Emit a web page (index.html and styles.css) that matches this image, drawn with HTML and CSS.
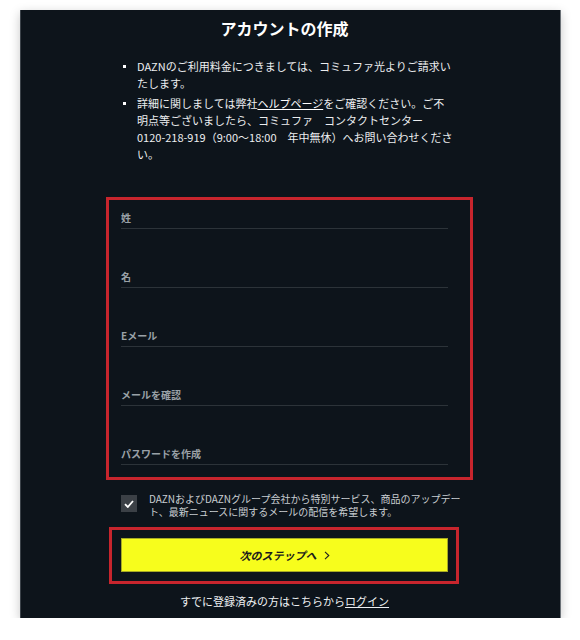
FILE: index.html
```html
<!DOCTYPE html>
<html lang="ja">
<head>
  <meta charset="UTF-8">
  <meta name="viewport" content="width=device-width, initial-scale=1.0">
  <title>アカウントの作成 - DAZN</title>
  <link rel="stylesheet" href="styles.css">
</head>
<body>
  <div class="signup-panel">
    <div class="signup-column">
      <h1>アカウントの作成</h1>
      <ul class="notes">
        <li>DAZNのご利用料金につきましては、コミュファ光よりご請求いたします。</li>
        <li>詳細に関しましては弊社<a href="#">ヘルプページ</a>をご確認ください。ご不明点等ございましたら、コミュファ　コンタクトセンター<span class="tel">0120-218-919（9:00～18:00</span>　年中無休）へお問い合わせください。</li>
      </ul>

      <form id="signupForm" class="field-box">
        <div class="field"><label for="lastName">姓</label><input type="text" id="lastName"></div>
        <div class="field"><label for="firstName">名</label><input type="text" id="firstName"></div>
        <div class="field"><label for="email">Eメール</label><input type="email" id="email"></div>
        <div class="field"><label for="emailConfirm">メールを確認</label><input type="email" id="emailConfirm"></div>
        <div class="field"><label for="password">パスワードを作成</label><input type="password" id="password"></div>
      </form>

      <div class="optin">
        <span class="check">
          <svg width="10" height="8" viewBox="0 0 10 8"><path d="M1 4.2 L3.8 7 L9 1" fill="none" stroke="#fff" stroke-width="1.8"/></svg>
        </span>
        <p>DAZNおよびDAZNグループ会社から特別サービス、商品のアップデート、最新ニュースに関するメールの配信を希望します。</p>
      </div>

      <div class="btn-box">
        <button type="submit" form="signupForm" class="btn">次のステップへ
          <svg width="6" height="9" viewBox="0 0 6 9"><path d="M1 0.8 L4.8 4.5 L1 8.2" fill="none" stroke="#222" stroke-width="1.1"/></svg>
        </button>
      </div>

      <p class="login-link">すでに登録済みの方はこちらから<a href="#">ログイン</a></p>
    </div>
  </div>
</body>
</html>
```

FILE: styles.css
```css
* {
  box-sizing: border-box;
  margin: 0;
  padding: 0;
}

body {
  background: #fff;
  padding: 10px 19px 0 20px;
  font-family: "Noto Sans CJK JP", "Noto Sans", sans-serif;
}

.signup-panel {
  width: 541px;
  height: 608px;
  background-color: #0d141b;
  border-left: 1px solid #3c434a;
  border-right: 1px solid #6b7177;
  box-shadow: 0 3px 10px rgba(0,0,0,0.22);
  padding-left: 100px;
}

.signup-column {
  width: 360px;
}

.signup-column h1 {
  width: 327px;
  padding-top: 6px;
  color: #fff;
  font-size: 16px;
  line-height: 24px;
  font-weight: 700;
  text-align: center;
}

.notes {
  list-style: none;
  margin: 18px 0 0 2px;
  width: 332px;
}

.notes li {
  position: relative;
  padding-left: 14px;
  color: #eceef0;
  font-size: 11px;
  line-height: 17px;
  margin-bottom: 3px;
}

.notes li::before {
  content: "";
  position: absolute;
  left: 0;
  top: 7px;
  width: 3px;
  height: 3px;
  background: #fff;
}

.notes a {
  color: #fff;
  text-decoration: underline;
}

.tel {
  white-space: nowrap;
}

.field-box {
  width: 367px;
  margin: 34px 0 0 -15px;
  border: 3px solid #c7252d;
  padding: 11px 22px 12px 12px;
}

.field {
  display: flex;
  flex-direction: column;
  border-bottom: 1px solid #2c3339;
  padding-bottom: 3px;
  margin-top: 41px;
}

.field:first-child {
  margin-top: 0;
}

.field label {
  color: #9aa1a7;
  font-size: 10px;
  line-height: 14px;
  font-weight: 700;
}

.field input {
  display: none;
}

.optin {
  display: flex;
  gap: 12px;
  margin-top: 15px;
  width: 346px;
}

.check {
  flex: none;
  width: 16px;
  height: 17px;
  background: #3b4046;
  display: flex;
  justify-content: center;
  align-items: center;
}

.optin p {
  color: #c9ced2;
  font-size: 10px;
  line-height: 13px;
  margin-top: -3px;
  width: 312px;
}

.btn-box {
  width: 350px;
  margin: 9px 0 0 -12px;
  border: 3px solid #c7252d;
  padding: 8px 8px 9px 9px;
}

.btn {
  width: 327px;
  height: 34px;
  background-color: #f7fd1c;
  border: 1px solid #a6a925;
  color: #1b1b1b;
  font-family: inherit;
  font-size: 11px;
  font-weight: 700;
  font-style: italic;
  display: flex;
  justify-content: center;
  align-items: center;
  gap: 7px;
  cursor: pointer;
}

.login-link {
  width: 327px;
  margin-top: 9px;
  text-align: center;
  color: #eef0f2;
  font-size: 11px;
  line-height: 16px;
}

.login-link a {
  color: #eef0f2;
  text-decoration: underline;
}
```
